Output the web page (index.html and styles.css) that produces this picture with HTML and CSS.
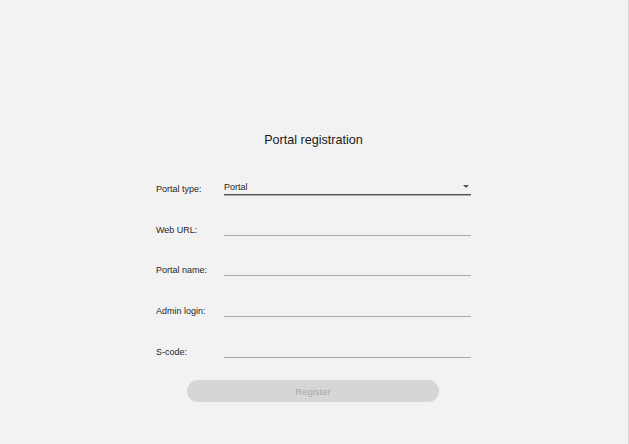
FILE: index.html
```html
<!DOCTYPE html>
<html lang="en">
<head>
<meta charset="utf-8">
<title>Portal registration</title>
<link rel="stylesheet" href="styles.css">
</head>
<body>
<div class="page">
  <h1 class="title">Portal registration</h1>
  <form class="form">
    <div class="row">
      <label class="label">Portal type:</label>
      <div class="field field-select">
        <span class="value">Portal</span>
        <span class="arrow"></span>
      </div>
    </div>
    <div class="row">
      <label class="label">Web URL:</label>
      <div class="field"></div>
    </div>
    <div class="row">
      <label class="label">Portal name:</label>
      <div class="field"></div>
    </div>
    <div class="row">
      <label class="label">Admin login:</label>
      <div class="field"></div>
    </div>
    <div class="row">
      <label class="label">S-code:</label>
      <div class="field"></div>
    </div>
    <div class="actions">
      <button type="button" class="btn" disabled>Register</button>
    </div>
  </form>
</div>
</body>
</html>
```

FILE: styles.css
```css
html, body {
  margin: 0;
  padding: 0;
  background: #f2f2f2;
}
body {
  font-family: "Liberation Sans", Arial, sans-serif;
  color: #222;
}
.page {
  box-sizing: border-box;
  height: 444px;
  width: 629px;
  border-right: 1px solid #d6d6d6;
  padding-top: 132px;
  padding-right: 2px;
  display: flex;
  flex-direction: column;
  align-items: center;
}
.title {
  margin: 0;
  font-size: 12.6px;
  line-height: 16px;
  font-weight: normal;
  color: #1a1a1a;
  margin-left: 1px;
}
.form {
  width: 315px;
  display: flex;
  flex-direction: column;
  margin-top: 6px;
  margin-left: 1px;
}
.row {
  display: flex;
  align-items: flex-end;
  height: 40.75px;
}
.label {
  width: 68px;
  flex: none;
  font-size: 9px;
  line-height: 12px;
  margin-bottom: 0;
  color: #262626;
}
.field {
  box-sizing: border-box;
  width: 247px;
  height: 20px;
  border-bottom: 1px solid #a9a9a9;
  display: flex;
  align-items: flex-end;
  justify-content: space-between;
  padding-bottom: 1px;
}
.field-select {
  border-bottom-color: #505050;
  box-shadow: 0 1px 0 #b0b0b0;
}
.value {
  font-size: 9px;
  line-height: 12px;
  color: #262626;
}
.arrow {
  width: 0;
  height: 0;
  border-left: 3px solid transparent;
  border-right: 3px solid transparent;
  border-top: 3px solid #555;
  margin-right: 2px;
  margin-bottom: 5px;
}
.actions {
  display: flex;
  justify-content: center;
  margin-top: 22px;
}
.btn {
  width: 252px;
  height: 22px;
  border: none;
  border-radius: 11px;
  background: #d6d6d6;
  color: #a8a8a8;
  font-family: "Liberation Sans", Arial, sans-serif;
  font-size: 9.5px;
  padding: 1px 0 0;
  margin-right: 1px;
}
```
